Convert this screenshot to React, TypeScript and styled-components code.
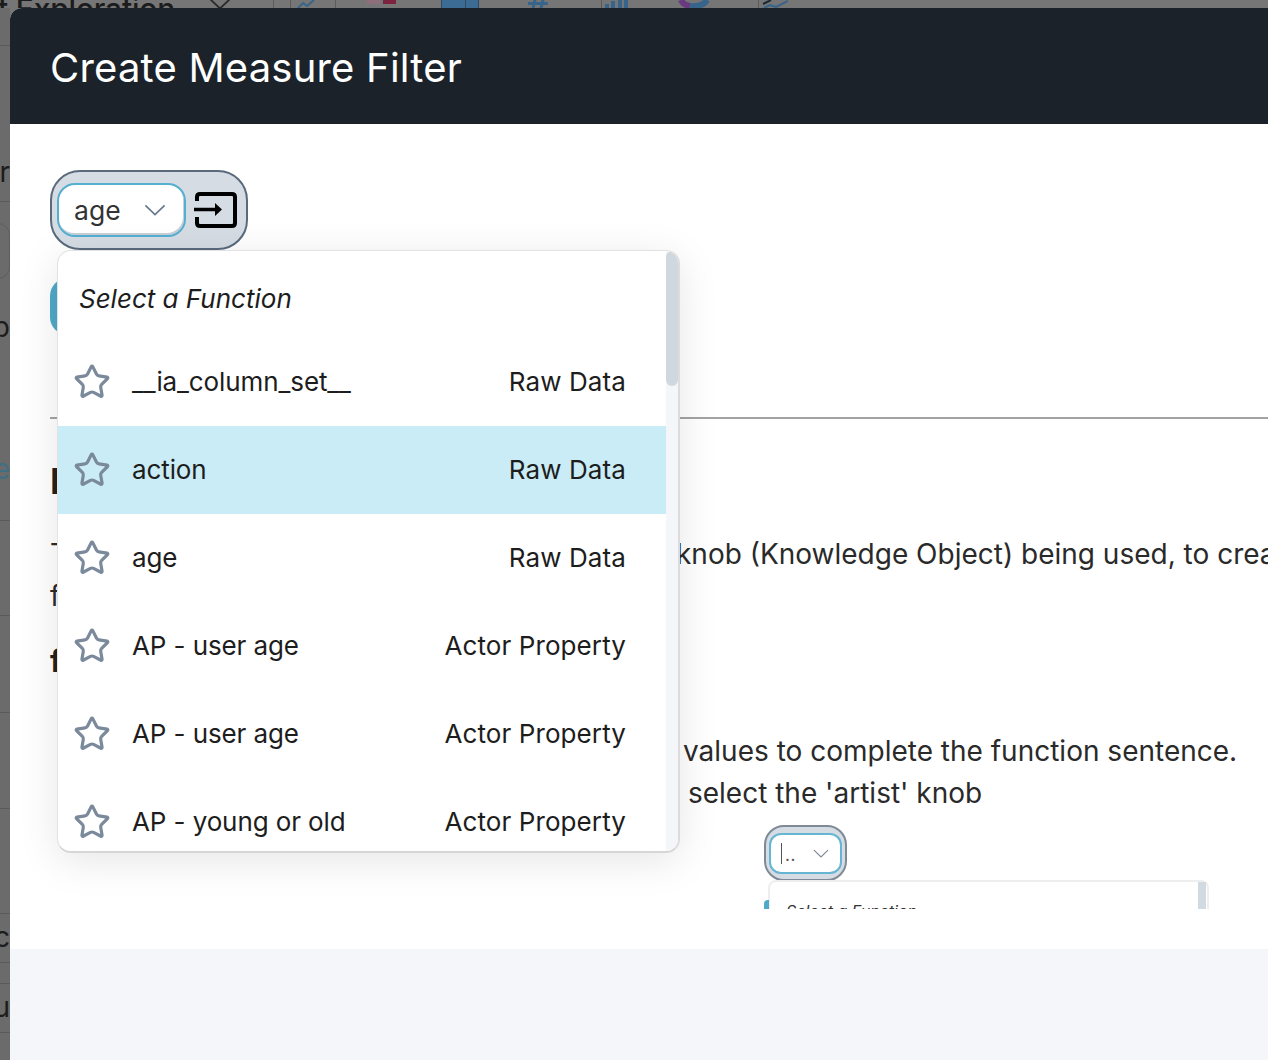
import { createGlobalStyle } from 'styled-components'
import styled from 'styled-components'
import { Star } from 'lucide-react'

const GlobalStyle = createGlobalStyle`
  html, body {
    margin: 0;
    padding: 0;
    background: #767676;
    font-family: 'Inter', 'Liberation Sans', sans-serif;
  }
  * {
    box-sizing: border-box;
  }
`

type Fn = { name: string; group: string; active?: boolean }

const functions: Fn[] = [
  { name: '__ia_column_set__', group: 'Raw Data' },
  { name: 'action', group: 'Raw Data', active: true },
  { name: 'age', group: 'Raw Data' },
  { name: 'AP - user age', group: 'Actor Property' },
  { name: 'AP - user age', group: 'Actor Property' },
  { name: 'AP - young or old', group: 'Actor Property' },
  { name: 'AP - zip code', group: 'Actor Property' },
]

type LeftRow = { h: number; line?: boolean; text?: string; bottom?: number; tone?: string; box?: boolean }

// what is left of the page behind the modal, down the left edge
const leftRows: LeftRow[] = [
  { h: 38, line: true },
  { h: 156, line: true, text: 'r', bottom: 14 },
  { h: 100, box: true },
  { h: 50, text: 'p', bottom: 9 },
  { h: 169, line: true, text: 'e', bottom: 36, tone: '#3f6f85' },
  { h: 95, line: true },
  { h: 97, line: true },
  { h: 96, line: true },
  { h: 105, line: true },
  { h: 49, line: true, text: 'c', bottom: 10 },
  { h: 21, line: true },
  { h: 49, line: true, text: 'u', bottom: 10 },
]

const Chevron = ({ width, height, color }: { width: number; height: number; color: string }) => (
  <svg viewBox="0 0 24 13" width={width} height={height}>
    <path d="M1.5 1.5 L12 11.5 L22.5 1.5" fill="none" stroke={color} strokeWidth="1.8" />
  </svg>
)

const App = () => (
  <>
    <GlobalStyle />
    <Page>
      <BackTop>
        <BackTitle>t Exploration</BackTitle>
        <BackChevron>
          <Chevron width={24} height={13} color="#2a2a2a" />
        </BackChevron>
        <BackDivider $left={41} />
        <BackDivider $left={16} />
        <BackIcon $left={6} viewBox="0 0 18 8" width="18" height="8">
          <path d="M1 8 L6 3 L10 6 L17 0" fill="none" stroke="#36648a" strokeWidth="2" />
        </BackIcon>
        <BackDivider $left={20} />
        <BackSwatch $left={31} $color="#8f6e7c" />
        <BackSwatch $left={3} $color="#7d2340" />
        <BackBlock $left={45} />
        <BackIcon $left={49} viewBox="0 0 20 8" width="20" height="8">
          <path d="M7 0 L5 8 M15 0 L13 8 M0 3.5 H20" fill="none" stroke="#36648a" strokeWidth="3" />
        </BackIcon>
        <BackDivider $left={53} />
        <BackIcon $left={3} viewBox="0 0 23 8" width="23" height="8">
          <path d="M2 4 V8 M8 1 V8 M15 0 V8 M21 0 V8" fill="none" stroke="#36648a" strokeWidth="4" />
        </BackIcon>
        <BackIcon $left={50} viewBox="0 0 32 8" width="32" height="8">
          <path d="M3 0 Q5 5 12 6" fill="none" stroke="#6a3a80" strokeWidth="6" />
          <path d="M12 6 Q25 7 29 0" fill="none" stroke="#36648a" strokeWidth="6" />
        </BackIcon>
        <BackDivider $left={48} />
        <BackIcon $left={3} viewBox="0 0 26 8" width="26" height="8">
          <path d="M1 4 L9 0" fill="none" stroke="#1b2a33" strokeWidth="2" />
          <path d="M2 8 L8 5 L14 7 L26 1" fill="none" stroke="#36648a" strokeWidth="2" />
        </BackIcon>
      </BackTop>

      <BackLeft>
        {leftRows.map((row, i) => (
          <BackRow key={i} $h={row.h} $line={row.line}>
            {row.box && <BackBox />}
            {row.text && (
              <BackGlyph $bottom={row.bottom ?? 0} $tone={row.tone ?? '#1c1c1c'}>
                {row.text}
              </BackGlyph>
            )}
          </BackRow>
        ))}
      </BackLeft>

      <Modal>
        <Header>
          <Title>Create Measure Filter</Title>
        </Header>

        <Body>
          <Pill>
            <Select>
              <SelectValue>age</SelectValue>
              <Chevron width={22} height={12} color="#68778a" />
            </Select>
            <ExitIcon viewBox="0 0 44 38" width="44" height="38">
              <path
                d="M3 10 V6 Q3 3 6 3 H38 Q41 3 41 6 V32 Q41 35 38 35 H6 Q3 35 3 32 V26"
                fill="none"
                stroke="#000"
                strokeWidth="4"
              />
              <path d="M0 18.5 H22" stroke="#000" strokeWidth="3.4" />
              <path d="M21 12 L28 18.5 L21 25 Z" fill="#000" />
            </ExitIcon>
          </Pill>

          <BlueButton />
          <Rule />

          <Heading>How it works</Heading>
          <Para>
            <Covered $w={626}>The sentence changes with the</Covered>knob (Knowledge Object) being used, to create a
          </Para>
          <Para>function sentence.</Para>
          <SubHeading>for example</SubHeading>
          <Para $top={51}>
            <Covered $w={633} $indent={20}>
              Select a function, then choose
            </Covered>
            values to complete the function sentence.
          </Para>
          <Para>
            <Covered $w={622} $indent={20}>
              Choose 'count' and then
            </Covered>
            : select the 'artist' knob
          </Para>

          <Shot>
            <MiniPill>
              <MiniSelect>
                <MiniValue>..</MiniValue>
                <Chevron width={16} height={9} color="#7d8a99" />
              </MiniSelect>
            </MiniPill>
            <MiniMenu>
              <MiniDot />
              <MiniLabel>Select a Function</MiniLabel>
              <MiniThumb />
            </MiniMenu>
          </Shot>

          <Menu>
            <MenuList>
              <MenuHeader>Select a Function</MenuHeader>
              {functions.map((fn, i) => (
                <MenuRow key={i} $active={fn.active}>
                  <Star size={38} strokeWidth={2} color="#7a8a9c" />
                  <RowName>{fn.name}</RowName>
                  <RowGroup>{fn.group}</RowGroup>
                </MenuRow>
              ))}
            </MenuList>
            <Track>
              <Thumb />
            </Track>
          </Menu>
        </Body>

        <Footer />
      </Modal>
    </Page>
  </>
)

export default App

const Page = styled.div`
  position: relative;
  width: 1268px;
  height: 1060px;
  overflow: hidden;
  background: #767676;
`

const BackTop = styled.div`
  display: flex;
  align-items: flex-start;
  height: 8px;
  overflow: hidden;
  background: #767676;
`

const BackTitle = styled.div`
  flex: none;
  width: 178px;
  margin-top: -9px;
  margin-left: -2px;
  font-size: 30px;
  line-height: 36px;
  font-weight: 500;
  letter-spacing: -0.2px;
  color: #1c1c1c;
  white-space: nowrap;
`

const BackChevron = styled.div`
  flex: none;
  width: 24px;
  height: 8px;
  margin-top: -6px;
  margin-left: 32px;
`

const BackDivider = styled.div<{ $left: number }>`
  flex: none;
  width: 1px;
  height: 8px;
  margin-left: ${({ $left }) => $left}px;
  background: #5b5b5b;
`

const BackIcon = styled.svg<{ $left: number }>`
  flex: none;
  margin-left: ${({ $left }) => $left}px;
`

const BackSwatch = styled.div<{ $left: number; $color: string }>`
  flex: none;
  width: 13px;
  height: 4px;
  margin-left: ${({ $left }) => $left}px;
  background: ${({ $color }) => $color};
`

const BackBlock = styled.div<{ $left: number }>`
  flex: none;
  width: 38px;
  height: 8px;
  margin-left: ${({ $left }) => $left}px;
  background: linear-gradient(90deg, #3c6c94 0 23px, #2c4a66 23px 24px, #3c6c94 24px);
  border-left: 1px solid #2c4a66;
  border-right: 1px solid #2c4a66;
`

const BackLeft = styled.div`
  display: flex;
  flex-direction: column;
  width: 10px;
  height: 1052px;
  overflow: hidden;
  background: #6b6b6b;
`

const BackRow = styled.div<{ $h: number; $line?: boolean }>`
  position: relative;
  flex: none;
  height: ${({ $h }) => $h}px;
  width: 10px;
  overflow: hidden;
  border-bottom: 1px solid ${({ $line }) => ($line ? '#5a5a5a' : 'transparent')};
`

const BackGlyph = styled.div<{ $bottom: number; $tone: string }>`
  position: absolute;
  right: 0;
  bottom: ${({ $bottom }) => $bottom}px;
  font-size: 28px;
  line-height: 30px;
  color: ${({ $tone }) => $tone};
`

const BackBox = styled.div`
  position: absolute;
  right: 0;
  top: 21px;
  width: 40px;
  height: 56px;
  border: 1px solid #5e5e5e;
  border-radius: 12px;
`

const Modal = styled.div`
  position: absolute;
  left: 10px;
  top: 8px;
  width: 1300px;
  height: 1052px;
  display: flex;
  flex-direction: column;
  border-radius: 12px 0 0 0;
  overflow: hidden;
  background: #fff;
`

const Header = styled.div`
  flex: none;
  height: 116px;
  padding: 4px 40px 0;
  display: flex;
  align-items: center;
  background: #1b2229;
`

const Title = styled.h1`
  margin: 0;
  font-size: 40px;
  line-height: 1;
  font-weight: 400;
  letter-spacing: 0.2px;
  color: #fff;
`

const Body = styled.div`
  position: relative;
  flex: none;
  height: 825px;
  padding: 46px 0 0 40px;
  background: #fff;
  overflow: hidden;
`

const Pill = styled.div`
  display: flex;
  align-items: center;
  gap: 8px;
  width: 198px;
  height: 80px;
  padding: 0 8px 0 5px;
  border: 2px solid #5a6a7d;
  border-radius: 30px;
  background: #d5dce3;
`

const Select = styled.div`
  flex: none;
  display: flex;
  align-items: center;
  justify-content: space-between;
  width: 129px;
  height: 54px;
  padding: 0 18px 0 15px;
  border: 2px solid #54afd0;
  border-radius: 18px;
  background: #fff;
  box-shadow: inset -1px -2px 0 #c6ced6;
`

const SelectValue = styled.span`
  font-size: 26.5px;
  color: #333;
`

const ExitIcon = styled.svg`
  flex: none;
`

const BlueButton = styled.div`
  width: 120px;
  height: 57px;
  margin-top: 28px;
  border-radius: 18px;
  background: #4fa9c9;
`

const Rule = styled.div`
  height: 2px;
  margin-top: 82px;
  background: #a3a3a3;
`

const Heading = styled.h2`
  margin: 40px 0 30px;
  font-size: 36px;
  line-height: 44px;
  font-weight: 700;
  color: #222;
  white-space: nowrap;
`

const Para = styled.p<{ $top?: number }>`
  margin: ${({ $top }) => $top ?? 0}px 0 0;
  font-size: 28px;
  line-height: 42px;
  color: #2a2a2a;
  white-space: nowrap;
`

const Covered = styled.span<{ $w: number; $indent?: number }>`
  display: inline-block;
  width: ${({ $w }) => $w}px;
  padding-left: ${({ $indent }) => $indent ?? 0}px;
  overflow: hidden;
  vertical-align: bottom;
`

const SubHeading = styled.h3`
  margin: 26px 0 0;
  font-size: 30px;
  line-height: 36px;
  font-weight: 700;
  color: #222;
`

const Shot = styled.div`
  display: flex;
  flex-direction: column;
  width: 460px;
  height: 84px;
  margin: 11px 0 0 714px;
  overflow: hidden;
`

const MiniPill = styled.div`
  flex: none;
  display: flex;
  align-items: center;
  width: 83px;
  height: 56px;
  padding: 0 3px;
  border: 2px solid #7f8a96;
  border-radius: 20px;
  background: #d5dce3;
`

const MiniSelect = styled.div`
  display: flex;
  align-items: center;
  justify-content: space-between;
  width: 75px;
  height: 41px;
  padding: 0 11px 0 10px;
  border: 2px solid #65b5d3;
  border-radius: 12px;
  background: #fff;
`

const MiniValue = styled.span`
  height: 21px;
  padding-left: 3px;
  border-left: 1.5px solid #555;
  font-size: 17px;
  line-height: 24px;
  letter-spacing: 0.6px;
  color: #555;
`

const MiniMenu = styled.div`
  position: relative;
  flex: none;
  width: 441px;
  height: 60px;
  margin: -1px 0 0 4px;
  padding: 19px 16px;
  border: 2px solid #eeeeee;
  border-radius: 8px;
  background: #fff;
`

const MiniDot = styled.div`
  position: absolute;
  left: -6px;
  top: 18px;
  width: 5px;
  height: 30px;
  border-radius: 4px 0 0 4px;
  background: #4fa9c9;
`

const MiniLabel = styled.div`
  font-size: 16px;
  font-style: italic;
  color: #333;
`

const MiniThumb = styled.div`
  position: absolute;
  right: 1px;
  top: 0;
  width: 8px;
  height: 30px;
  background: #d2dae1;
`

const Menu = styled.div`
  position: absolute;
  left: 47px;
  top: 126px;
  display: flex;
  width: 623px;
  height: 603px;
  overflow: hidden;
  border: 1px solid #e2e2e2;
  border-right: 2px solid #dcdcdc;
  border-bottom: 2px solid #d6d6d6;
  border-radius: 14px;
  background: #fff;
  box-shadow: 0 8px 40px rgba(0, 0, 0, 0.1);
`

const MenuList = styled.div`
  flex: 1;
  min-width: 0;
  height: 100%;
  overflow: hidden;
`

const MenuHeader = styled.div`
  height: 87px;
  padding: 32px 21px 0;
  font-size: 26px;
  line-height: 32px;
  font-style: italic;
  color: #1d1d1d;
`

const MenuRow = styled.div<{ $active?: boolean }>`
  display: flex;
  align-items: center;
  height: 88px;
  padding: 0 40px 0 15px;
  background: ${({ $active }) => ($active ? '#caecf6' : 'transparent')};
`

const RowName = styled.span`
  margin: -1px 0 0 21px;
  font-size: 26px;
  letter-spacing: -0.1px;
  color: #1d1d1d;
`

const RowGroup = styled.span`
  margin: -1px 0 0 auto;
  font-size: 26px;
  letter-spacing: 0.1px;
  color: #1d1d1d;
`

const Track = styled.div`
  flex: none;
  width: 12px;
  height: 100%;
  background: #f5f6fa;
`

const Thumb = styled.div`
  width: 12px;
  height: 135px;
  border-radius: 6px;
  background: #cfd8df;
`

const Footer = styled.div`
  flex: 1;
  background: #f5f6fa;
`
